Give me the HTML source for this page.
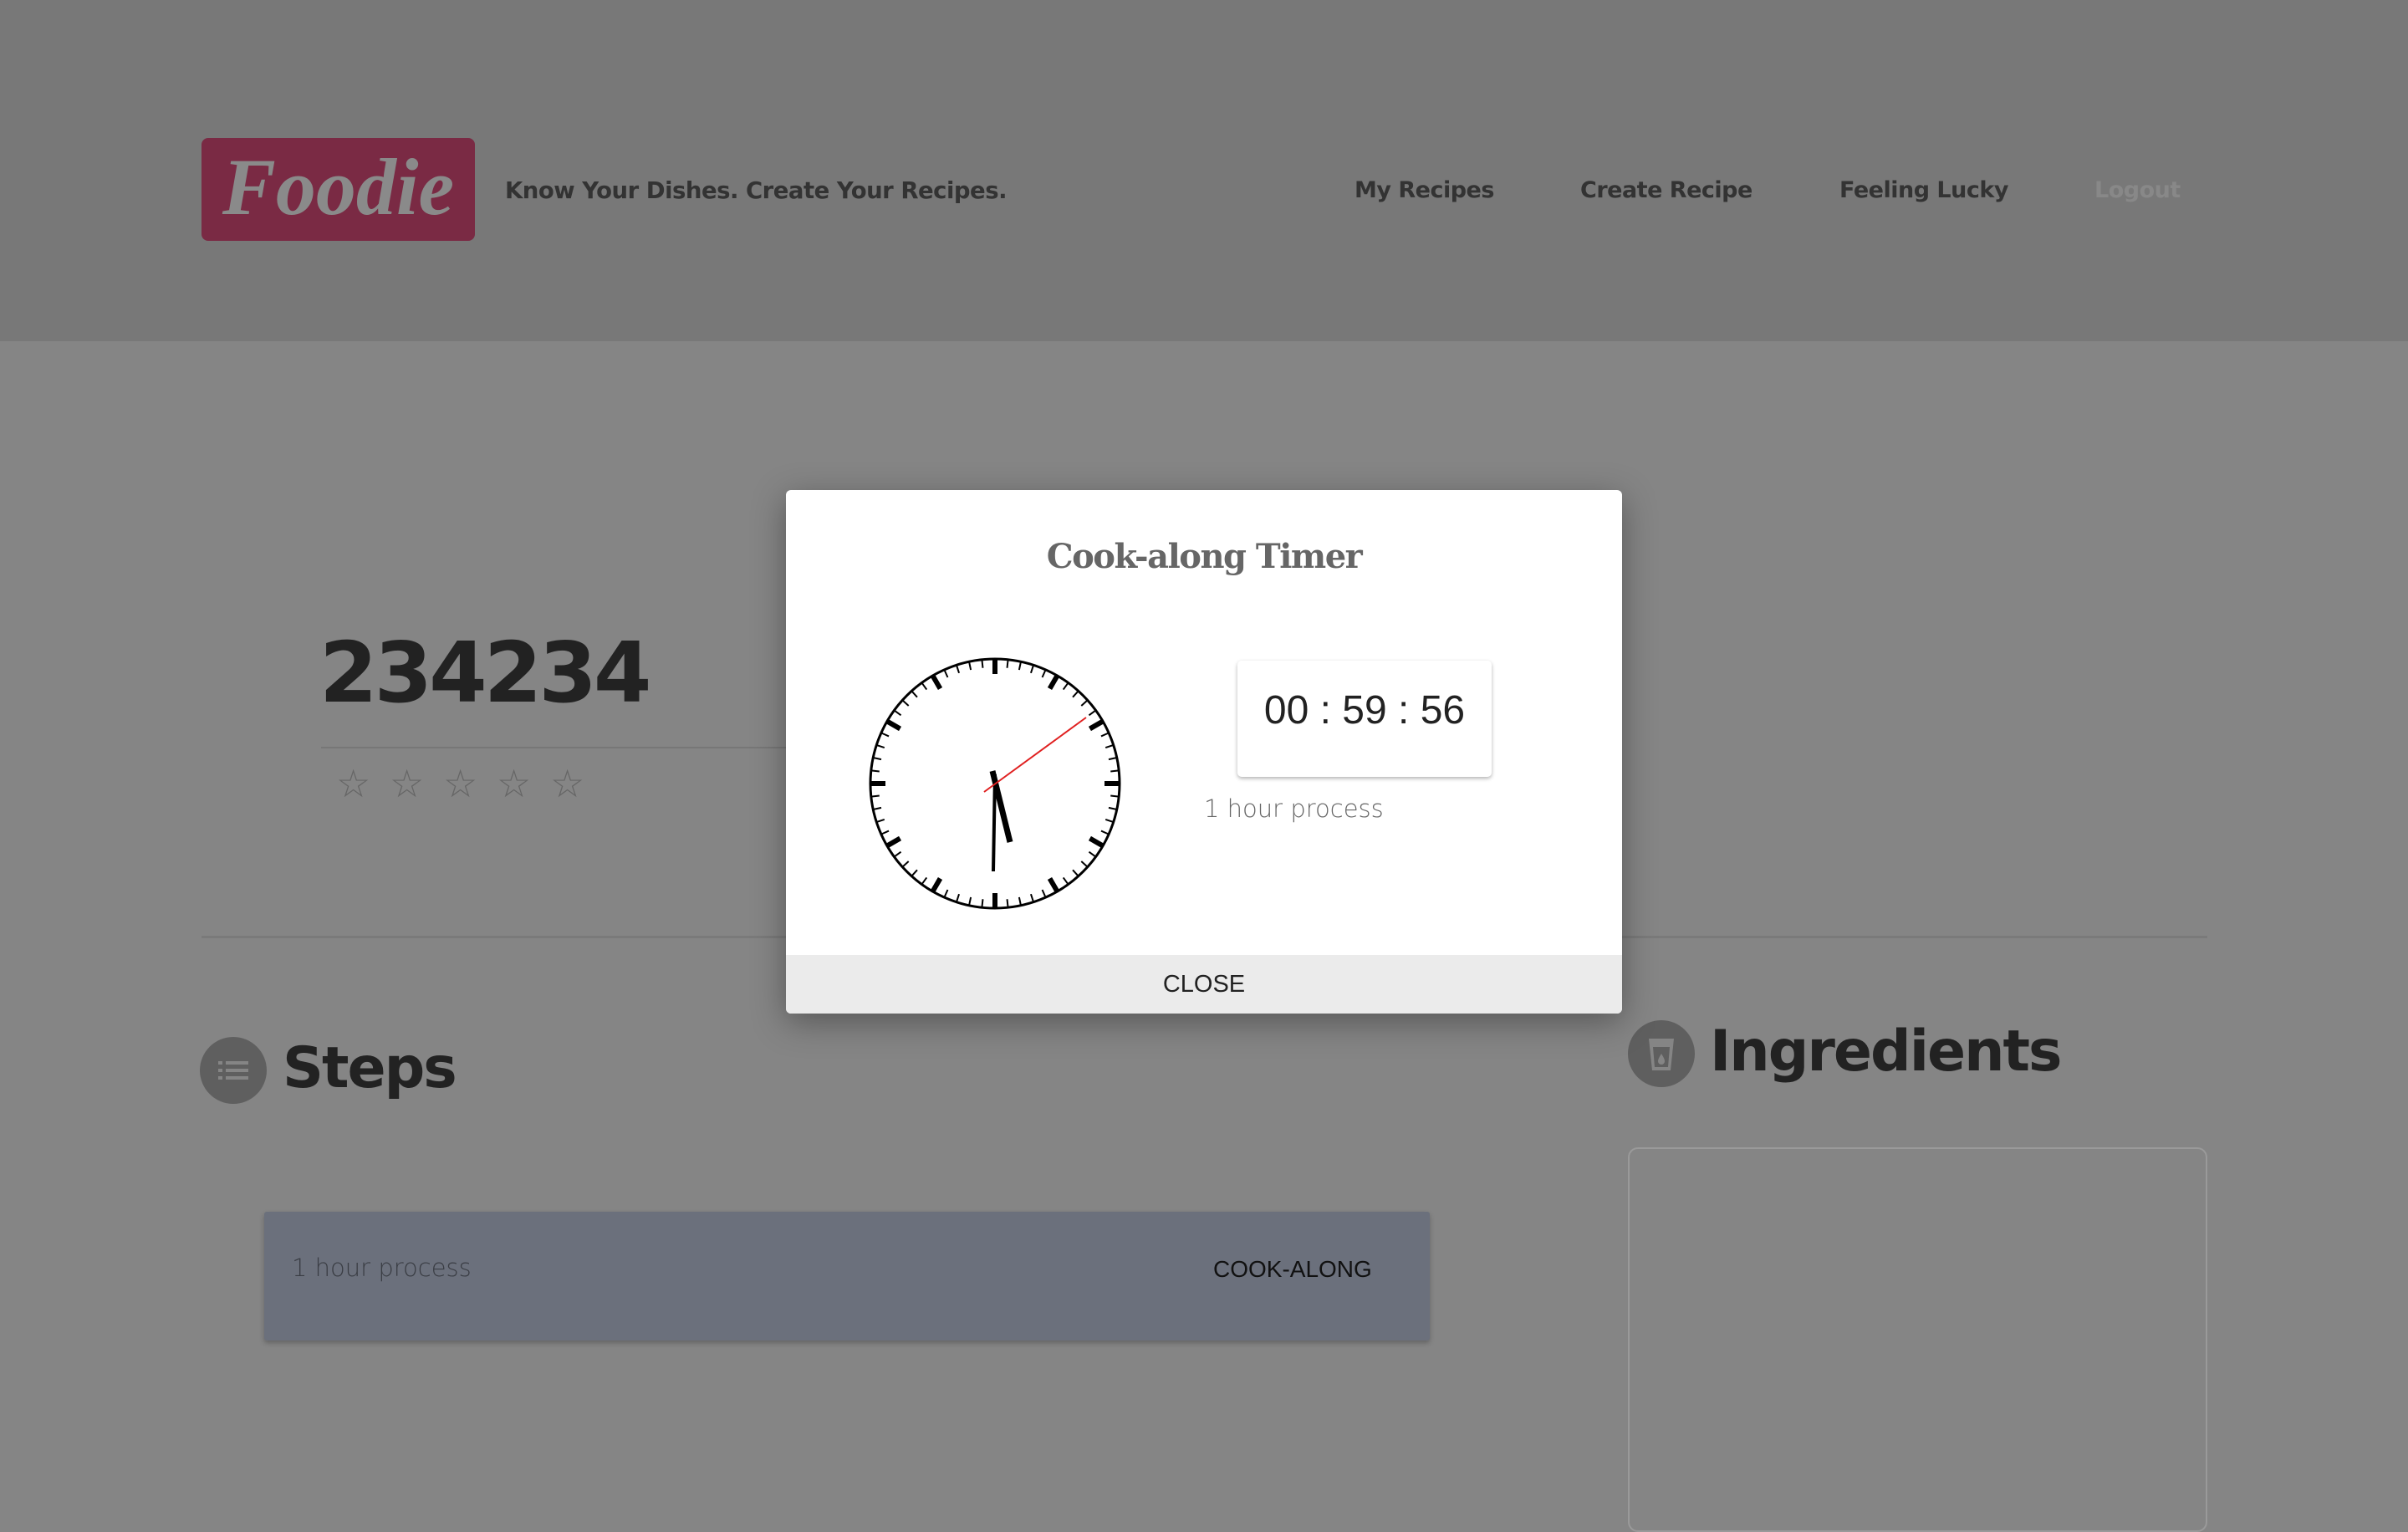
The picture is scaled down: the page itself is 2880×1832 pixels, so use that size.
<!DOCTYPE html>
<html><head><meta charset="utf-8"><style>
*{margin:0;padding:0;box-sizing:border-box}
body{width:2880px;height:1800px;overflow:hidden;background:#858585;font-family:"Liberation Sans",sans-serif;position:relative}
.a{position:absolute;white-space:nowrap}
.hdr{position:absolute;left:0;top:0;width:2880px;height:408px;background:#787878}
.logo{left:241px;top:165px;width:327px;height:123px;background:#7a2a44;border-radius:8px;color:#8a8a8a;font:italic bold 96px "Liberation Serif",serif;text-align:center;line-height:118px}
.tag{left:604px;top:212px;font:bold 27.5px "DejaVu Sans",sans-serif;color:#333;letter-spacing:-0.5px}
.nav{top:212px;font:bold 27px "DejaVu Sans",sans-serif;color:#333;letter-spacing:-0.5px}
.big{left:382px;top:746px;font:bold 100px "DejaVu Sans",sans-serif;color:#222;letter-spacing:-4px}
.star{top:910px;font-size:46px;color:#666}
.h2{font:bold 68px "DejaVu Sans",sans-serif;color:#222;letter-spacing:-2px}
.ic{width:80px;height:80px;border-radius:50%;background:#5f5f5f}
.modal{left:940px;top:586px;width:1000px;height:626px;background:#fff;border-radius:6px;box-shadow:0 10px 40px rgba(0,0,0,.35);overflow:hidden}
</style></head><body>
<div class="hdr"></div>
<div class="a logo">Foodie</div>
<div class="a tag">Know Your Dishes. Create Your Recipes.</div>
<div class="a nav" style="left:1620px">My Recipes</div>
<div class="a nav" style="left:1890px">Create Recipe</div>
<div class="a nav" style="left:2200px">Feeling Lucky</div>
<div class="a nav" style="left:2505px;color:#888">Logout</div>

<div class="a big">234234</div>
<div class="a" style="left:384px;top:893px;width:600px;height:2px;background:#777"></div>
<div class="a star" style="left:402px">☆</div><div class="a star" style="left:466px">☆</div><div class="a star" style="left:530px">☆</div><div class="a star" style="left:594px">☆</div><div class="a star" style="left:658px">☆</div>
<div class="a" style="left:241px;top:1119px;width:2399px;height:3px;background:#7a7a7a"></div>

<div class="a ic" style="left:239px;top:1240px"><svg width="80" height="80"><g fill="#858585"><rect x="22" y="29" width="5" height="4"/><rect x="31" y="29" width="27" height="4"/><rect x="22" y="38" width="5" height="4"/><rect x="31" y="38" width="27" height="4"/><rect x="22" y="47" width="5" height="4"/><rect x="31" y="47" width="27" height="4"/></g></svg></div>
<div class="a h2" style="left:338px;top:1238px">Steps</div>
<div class="a ic" style="left:1947px;top:1220px"><svg width="80" height="80"><path d="M25 22h30l-4 38h-22z" fill="#858585"/><path d="M30 32h20l-2 24h-16z" fill="#5f5f5f"/><path d="M40 40c-3 5-4 7-4 9a4 4 0 0 0 8 0c0-2-1-4-4-9z" fill="#858585"/></svg></div>
<div class="a h2" style="left:2045px;top:1218px">Ingredients</div>

<div class="a" style="left:316px;top:1449px;width:1394px;height:154px;background:#6b707c;border-radius:3px;box-shadow:0 3px 6px rgba(0,0,0,.25)"></div>
<div class="a" style="left:349px;top:1499px;font:300 29px 'DejaVu Sans',sans-serif;color:#3a3d44">1 hour process</div>
<div class="a" style="left:1451px;top:1502px;font:28px 'Liberation Sans',sans-serif;color:#111">COOK-ALONG</div>
<div class="a" style="left:1947px;top:1372px;width:693px;height:460px;border:2px solid #9a9a9a;border-radius:12px"></div>

<div class="a modal">
 <div class="a" style="left:0;top:56px;width:1000px;text-align:center;font:bold 40px 'DejaVu Serif',serif;color:#666;letter-spacing:-1.5px">Cook-along Timer</div>
 <svg class="a" style="left:0;top:0" width="1000" height="626">
  <defs>
   <line id="m" x1="250" y1="202" x2="250" y2="212" stroke="#000" stroke-width="2"/>
   <line id="M" x1="250" y1="202" x2="250" y2="220" stroke="#000" stroke-width="6"/>
  </defs>
  <circle cx="250" cy="351" r="149" fill="#fff" stroke="#000" stroke-width="3"/>
  <g>
   <use href="#M"/><use href="#m" transform="rotate(6 250 351)"/><use href="#m" transform="rotate(12 250 351)"/><use href="#m" transform="rotate(18 250 351)"/><use href="#m" transform="rotate(24 250 351)"/>
   <use href="#M" transform="rotate(30 250 351)"/><use href="#m" transform="rotate(36 250 351)"/><use href="#m" transform="rotate(42 250 351)"/><use href="#m" transform="rotate(48 250 351)"/><use href="#m" transform="rotate(54 250 351)"/>
   <use href="#M" transform="rotate(60 250 351)"/><use href="#m" transform="rotate(66 250 351)"/><use href="#m" transform="rotate(72 250 351)"/><use href="#m" transform="rotate(78 250 351)"/><use href="#m" transform="rotate(84 250 351)"/>
   <use href="#M" transform="rotate(90 250 351)"/><use href="#m" transform="rotate(96 250 351)"/><use href="#m" transform="rotate(102 250 351)"/><use href="#m" transform="rotate(108 250 351)"/><use href="#m" transform="rotate(114 250 351)"/>
   <use href="#M" transform="rotate(120 250 351)"/><use href="#m" transform="rotate(126 250 351)"/><use href="#m" transform="rotate(132 250 351)"/><use href="#m" transform="rotate(138 250 351)"/><use href="#m" transform="rotate(144 250 351)"/>
   <use href="#M" transform="rotate(150 250 351)"/><use href="#m" transform="rotate(156 250 351)"/><use href="#m" transform="rotate(162 250 351)"/><use href="#m" transform="rotate(168 250 351)"/><use href="#m" transform="rotate(174 250 351)"/>
   <use href="#M" transform="rotate(180 250 351)"/><use href="#m" transform="rotate(186 250 351)"/><use href="#m" transform="rotate(192 250 351)"/><use href="#m" transform="rotate(198 250 351)"/><use href="#m" transform="rotate(204 250 351)"/>
   <use href="#M" transform="rotate(210 250 351)"/><use href="#m" transform="rotate(216 250 351)"/><use href="#m" transform="rotate(222 250 351)"/><use href="#m" transform="rotate(228 250 351)"/><use href="#m" transform="rotate(234 250 351)"/>
   <use href="#M" transform="rotate(240 250 351)"/><use href="#m" transform="rotate(246 250 351)"/><use href="#m" transform="rotate(252 250 351)"/><use href="#m" transform="rotate(258 250 351)"/><use href="#m" transform="rotate(264 250 351)"/>
   <use href="#M" transform="rotate(270 250 351)"/><use href="#m" transform="rotate(276 250 351)"/><use href="#m" transform="rotate(282 250 351)"/><use href="#m" transform="rotate(288 250 351)"/><use href="#m" transform="rotate(294 250 351)"/>
   <use href="#M" transform="rotate(300 250 351)"/><use href="#m" transform="rotate(306 250 351)"/><use href="#m" transform="rotate(312 250 351)"/><use href="#m" transform="rotate(318 250 351)"/><use href="#m" transform="rotate(324 250 351)"/>
   <use href="#M" transform="rotate(330 250 351)"/><use href="#m" transform="rotate(336 250 351)"/><use href="#m" transform="rotate(342 250 351)"/><use href="#m" transform="rotate(348 250 351)"/><use href="#m" transform="rotate(354 250 351)"/>
  </g>
  <line x1="247" y1="336" x2="268" y2="421" stroke="#000" stroke-width="7"/>
  <line x1="250" y1="340" x2="248" y2="456" stroke="#000" stroke-width="4"/>
  <line x1="237" y1="361" x2="359" y2="272" stroke="#e02020" stroke-width="2"/>
 </svg>
 <div class="a" style="left:540px;top:204px;width:304px;height:139px;background:#fff;border-radius:5px;box-shadow:0 2px 5px rgba(0,0,0,.3)"></div>
 <div class="a" style="left:540px;top:236px;width:304px;text-align:center;font:48px 'Liberation Sans',sans-serif;color:#222">00 : 59 : 56</div>
 <div class="a" style="left:500px;top:364px;font:300 29px 'DejaVu Sans',sans-serif;color:#666">1 hour process</div>
 <div class="a" style="left:0;top:556px;width:1000px;height:70px;background:#ebebeb;text-align:center;font:29px 'Liberation Sans',sans-serif;line-height:70px;color:#222">CLOSE</div>
</div>
</body></html>
